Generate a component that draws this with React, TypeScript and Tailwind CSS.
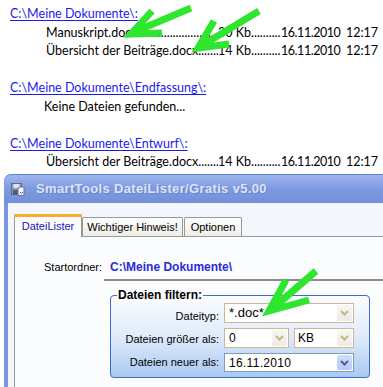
import React from "react";

const DOTS = ".".repeat(80);

function FileRow({ name, size }: { name: string; size: string }) {
  return (
    <div className="flex pl-[46px] whitespace-nowrap">
      <div className="flex w-[172px] overflow-hidden">
        <span className="shrink-0">{name}</span>
        <span className="flex-1 overflow-hidden">{DOTS}</span>
      </div>
      <div className="flex w-[63px] overflow-hidden">
        <span className="shrink-0">{size}</span>
        <span className="flex-1 overflow-hidden">{DOTS}</span>
      </div>
      <div className="w-[65px] shrink-0 overflow-hidden tracking-[-0.45px]">16.11.2010</div>
      <div className="shrink-0">12:17</div>
    </div>
  );
}

function Link({ children }: { children: React.ReactNode }) {
  return (
    <div className="pl-[10px]">
      <span className="text-[#1a1aee] underline underline-offset-[2px]">{children}</span>
    </div>
  );
}

function Chevron({ color }: { color: string }) {
  return (
    <svg width="9" height="6" viewBox="0 0 9 6">
      <polyline points="1,1 4.5,4.5 8,1" fill="none" stroke={color} strokeWidth="2" />
    </svg>
  );
}

function DisabledBtn() {
  return (
    <div className="flex h-full w-[15px] items-center justify-center bg-gradient-to-b from-[#f7f6f1] to-[#ecebe4]">
      <Chevron color="#c6b28c" />
    </div>
  );
}

export default function App() {
  return (
    <div className="relative h-[387px] w-[383px] overflow-hidden bg-white">
      {/* list */}
      <div className="pt-[5px] text-[12.5px] leading-[18.5px] text-black font-['Lato',sans-serif]">
        <Link>C:\Meine Dokumente\:</Link>
        <FileRow name="Manuskript.doc" size="30 Kb" />
        <FileRow name="Übersicht der Beiträge.docx" size="14 Kb" />
        <div className="h-[18.5px]" />
        <Link>C:\Meine Dokumente\Endfassung\:</Link>
        <div className="pl-[44px]">Keine Dateien gefunden...</div>
        <div className="h-[18.5px]" />
        <Link>C:\Meine Dokumente\Entwurf\:</Link>
        <FileRow name="Übersicht der Beiträge.docx" size="14 Kb" />
      </div>

      {/* window */}
      <div className="ml-[4px] mt-[2.5px] font-['Liberation_Sans',sans-serif]">
        <div className="flex h-[29px] items-center rounded-tl-[7px] border-t border-[#5a7fdc] bg-gradient-to-b from-[#9fb6ee] via-[#7d99e0] to-[#7490dc] pl-[7px]">
          <svg width="14" height="13" viewBox="0 0 14 13" className="shrink-0">
            <rect x="0.5" y="0.5" width="10" height="11" fill="#8d9ab6" stroke="#5d6a8a" />
            <rect x="2.5" y="1" width="6" height="4" fill="#dfe5f0" />
            <rect x="2" y="7" width="7" height="4.5" fill="#4e5c7c" />
            <path d="M8 4 h5 v8.5 h-6 v-6 z" fill="#f3f5fa" stroke="#6b7694" />
            <path d="M9 9 l1.5 1.5 l1.5 -1.5" fill="none" stroke="#3d61b8" strokeWidth="1" />
          </svg>
          <span className="ml-[11px] text-[13px] font-bold text-[#dde5f8] tracking-[0.35px] [text-shadow:1px_1px_0_#6a84c8]">
            SmartTools DateiLister/Gratis v5.00
          </span>
        </div>
        <div className="h-[200px] border-l-[4px] border-[#7b96df] bg-[#f3f6fc] pl-[6px] pt-[11px]">
          {/* tabs */}
          <div className="flex items-end text-[11px] leading-none">
            <div className="relative z-10 -mb-px flex h-[23px] w-[68px] items-center justify-center border-x border-[#919b9c] bg-[#fcfcfe] text-[#1818b4]">
              <div className="absolute left-[-1px] right-[-1px] top-0 h-[3px] rounded-t-[2px] bg-[#f4b02c]" />
              <span className="mt-[2px]">DateiLister</span>
            </div>
            <div className="flex h-[19px] w-[101px] items-center justify-center rounded-t-[2px] border border-b-0 border-[#919b9c] bg-gradient-to-b from-[#fefefe] to-[#eeede5] text-black">
              Wichtiger Hinweis!
            </div>
            <div className="ml-px flex h-[19px] w-[58px] items-center justify-center rounded-t-[2px] border border-b-0 border-[#919b9c] bg-gradient-to-b from-[#fefefe] to-[#eeede5] text-black">
              Optionen
            </div>
          </div>
          {/* panel */}
          <div className="h-[160px] border-l border-t border-[#919b9c] bg-[#fbfcfe] pl-[29px] pt-[23px]">
            <div className="flex items-baseline text-[11px] leading-[14px]">
              <span className="text-black">Startordner:</span>
              <span className="ml-[8px] text-[12px] font-bold text-[#2b2bd6]">C:\Meine Dokumente\</span>
            </div>
            <div className="ml-[60px] mt-[5px] h-[2px] bg-[#8c8c8c]" />
            {/* group box */}
            <div className="relative ml-[66px] mt-[14px] w-[260px] rounded-[4px] border border-[#3c6cc8] bg-gradient-to-b from-[#fbfcfe] via-[#e0ebfa] to-[#a9c9f1] pb-[5px] pr-[15px] pt-[7px]">
              <span className="absolute left-[6px] top-[-8px] bg-[#fbfcfe] px-[1px] text-[12px] font-bold leading-[14px] text-black">
                Dateien filtern:
              </span>
              <div className="flex flex-col gap-[5px] text-[11px] text-black">
                <div className="flex h-[20px] items-center">
                  <span className="w-[108px] pt-[6px] text-right">Dateityp:</span>
                  <div className="ml-[5px] flex h-[20px] w-[130px] items-center border border-[#c9b797] bg-white py-px pr-px">
                    <span className="flex-1 pl-[4px] text-[13px]">*.doc*</span>
                    <DisabledBtn />
                  </div>
                </div>
                <div className="flex h-[20px] items-center">
                  <span className="w-[108px] pt-[3px] text-right">Dateien größer als:</span>
                  <div className="ml-[5px] flex h-[20px] w-[65px] items-center border border-[#c9b797] bg-white py-px pr-px">
                    <span className="flex-1 pl-[4px] text-[12px]">0</span>
                    <DisabledBtn />
                  </div>
                  <div className="ml-[5px] flex h-[20px] w-[60px] items-center border border-[#c9b797] bg-white py-px pr-px">
                    <span className="flex-1 pl-[3px] text-[12px]">KB</span>
                    <DisabledBtn />
                  </div>
                </div>
                <div className="flex h-[19px] items-center">
                  <span className="w-[108px] text-right">Dateien neuer als:</span>
                  <div className="ml-[5px] flex h-[19px] w-[130px] items-center border border-[#7f9db9] bg-white py-px pr-px">
                    <span className="flex-1 pl-[4px] text-[12px] tracking-[0.3px]">16.11.2010</span>
                    <div className="flex h-full w-[15px] items-center justify-center rounded-[2px] bg-gradient-to-b from-[#d0ddfd] to-[#b5c8f7]">
                      <Chevron color="#4d6185" />
                    </div>
                  </div>
                </div>
              </div>
            </div>
          </div>
        </div>
      </div>

      {/* green arrows */}
      <svg className="pointer-events-none absolute left-0 top-0" width="383" height="387" viewBox="0 0 383 387">
        <g fill="none" stroke="#2fe62f" strokeWidth="7" strokeLinejoin="miter">
          <line x1="191" y1="8" x2="134" y2="32" />
          <polyline points="152,11 131,34 162,33" />
          <line x1="259" y1="11" x2="201" y2="46" />
          <polyline points="214,21 198,48 229,44" />
          <line x1="316" y1="271" x2="272" y2="309" />
          <polyline points="286,280 269,311 309,300" />
        </g>
      </svg>
    </div>
  );
}
